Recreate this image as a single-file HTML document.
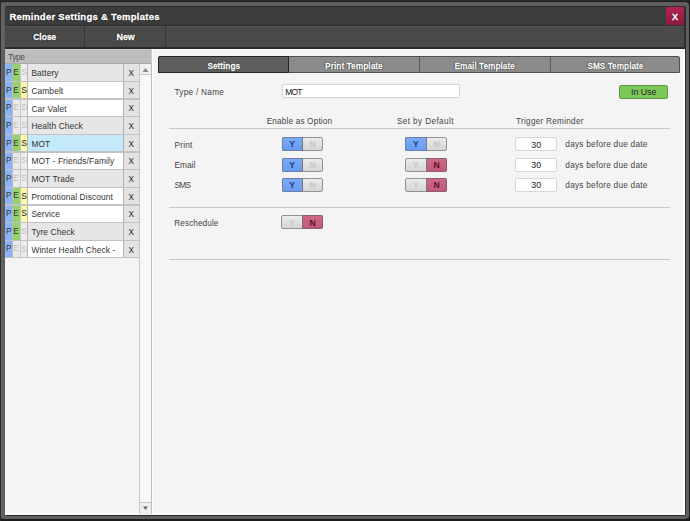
<!DOCTYPE html>
<html><head><meta charset="utf-8">
<style>
html,body{margin:0;padding:0;}
body{width:690px;height:521px;overflow:hidden;background:#2a2a2a;position:relative;font-family:"Liberation Sans",sans-serif;}
.b{position:absolute;box-sizing:border-box;}
.t{position:absolute;line-height:1;white-space:nowrap;font-family:"Liberation Sans",sans-serif;}
</style></head><body>
<div class="b" style="left:0.00px;top:0.00px;width:690.00px;height:521.00px;background:#1c1c1c;border-left:1px solid #2a2a2a;border-top:1px solid #2a2a2a;"></div>
<div class="b" style="left:1.00px;top:2.00px;width:688.00px;height:517.30px;background:#5e5e5e;border-radius:4px;"></div>
<div class="b" style="left:1.00px;top:2.00px;width:1.50px;height:517.30px;background:#646464;border-radius:4px 0 0 4px;"></div>
<div class="b" style="left:4.50px;top:6.00px;width:681.00px;height:509.80px;background:#2c2c2c;border-radius:2px;"></div>
<div class="b" style="left:4.60px;top:6.60px;width:679.90px;height:18.80px;background:#3c3c3c;"></div>
<div class="b" style="left:4.60px;top:24.60px;width:679.90px;height:1.20px;background:#2e2e2e;"></div>
<div class="t" style="left:9.40px;top:12.00px;font-size:9.5px;color:#fff;font-weight:bold;transform-origin:0 0;text-shadow:0 0 1px #000,0 0 1px #000,0 0 2px #000;-webkit-text-stroke:0.35px #fff;letter-spacing:0.28px;">Reminder Settings &amp; Templates</div>
<div class="b" style="left:665.80px;top:6.50px;width:18.70px;height:18.90px;background:linear-gradient(#b22253,#8c1a3f);border-top-right-radius:2px;"></div>
<div class="t" style="left:671.93px;top:13.00px;font-size:9.2px;color:#fff;font-weight:bold;transform-origin:50% 0;text-shadow:0 0 1px #300,0 0 2px #300;-webkit-text-stroke:0.3px #fff;">X</div>
<div class="b" style="left:4.60px;top:25.80px;width:679.90px;height:21.20px;background:#4a4a4a;border-top:1px solid #575757;"></div>
<div class="b" style="left:84.30px;top:25.40px;width:1.00px;height:21.60px;background:#363636;"></div>
<div class="b" style="left:165.10px;top:25.40px;width:1.00px;height:21.60px;background:#363636;"></div>
<div class="t" style="left:31.83px;top:32.00px;font-size:9.4px;color:#fff;font-weight:bold;transform:scaleX(0.9048);transform-origin:50% 0;text-shadow:0 0 1px #000,0 0 1px #000,0 0 2px #000;-webkit-text-stroke:0.35px #fff;">Close</div>
<div class="t" style="left:115.56px;top:32.00px;font-size:9.4px;color:#fff;font-weight:bold;transform:scaleX(0.9491);transform-origin:50% 0;text-shadow:0 0 1px #000,0 0 1px #000,0 0 2px #000;-webkit-text-stroke:0.35px #fff;">New</div>
<div class="b" style="left:5.00px;top:46.50px;width:679.50px;height:2.00px;background:#2a2a2a;"></div>
<div class="b" style="left:4.60px;top:48.50px;width:147.80px;height:466.00px;background:#f4f4f4;"></div>
<div class="b" style="left:4.60px;top:48.50px;width:147.00px;height:15.10px;background:#bdbdbd;border-right:1px solid #cfcfcf;border-top:1px solid #cacaca;border-bottom:1px solid #a9a9a9;"></div>
<div class="t" style="left:7.90px;top:53.00px;font-size:8.5px;color:#4e4e4e;font-weight:normal;letter-spacing:-0.413px;transform-origin:0 0;">Type</div>
<div class="b" style="left:5.00px;top:63.80px;width:7.40px;height:17.64px;background:#8ab4f6;"></div>
<div class="b" style="left:12.40px;top:63.80px;width:7.60px;height:17.64px;background:#93d36d;border-left:1px solid #b9b9b9;"></div>
<div class="b" style="left:20.00px;top:63.80px;width:7.40px;height:17.64px;background:#ececec;border-left:1px solid #c4c4c4;"></div>
<div class="b" style="left:27.40px;top:63.80px;width:95.60px;height:17.64px;background:#e6e6e6;border-left:1px solid #b3b3b3;"></div>
<div class="b" style="left:123.00px;top:63.80px;width:16.50px;height:17.64px;background:#e3e3e3;border-left:1px solid #b0b0b0;"></div>
<div class="t" style="left:6.07px;top:69.00px;font-size:8.2px;color:#333;font-weight:normal;transform-origin:50% 0;">P</div>
<div class="t" style="left:13.37px;top:69.00px;font-size:8.2px;color:#333;font-weight:normal;transform-origin:50% 0;">E</div>
<div class="t" style="left:21.13px;top:68.00px;font-size:8.6px;color:#bdbdbd;font-weight:normal;transform-origin:50% 0;">S</div>
<div class="t" style="left:31.40px;top:69.00px;font-size:8.4px;color:#333;font-weight:normal;transform-origin:0 0;letter-spacing:0.1px;">Battery</div>
<div class="t" style="left:128.57px;top:70.00px;font-size:8.2px;color:#222;font-weight:normal;transform-origin:50% 0;">X</div>
<div class="b" style="left:5.00px;top:81.44px;width:7.40px;height:17.64px;background:#8ab4f6;"></div>
<div class="b" style="left:12.40px;top:81.44px;width:7.60px;height:17.64px;background:#93d36d;border-left:1px solid #b9b9b9;"></div>
<div class="b" style="left:20.00px;top:81.44px;width:7.40px;height:17.64px;background:#fff9a6;border-left:1px solid #c4c4c4;"></div>
<div class="b" style="left:27.40px;top:81.44px;width:95.60px;height:17.64px;background:#ffffff;border-left:1px solid #b3b3b3;"></div>
<div class="b" style="left:123.00px;top:81.44px;width:16.50px;height:17.64px;background:#e3e3e3;border-left:1px solid #b0b0b0;"></div>
<div class="t" style="left:6.07px;top:87.00px;font-size:8.2px;color:#333;font-weight:normal;transform-origin:50% 0;">P</div>
<div class="t" style="left:13.37px;top:87.00px;font-size:8.2px;color:#333;font-weight:normal;transform-origin:50% 0;">E</div>
<div class="t" style="left:21.13px;top:86.00px;font-size:8.6px;color:#222;font-weight:normal;transform-origin:50% 0;">S</div>
<div class="t" style="left:31.40px;top:87.00px;font-size:8.4px;color:#333;font-weight:normal;transform-origin:0 0;letter-spacing:0.1px;">Cambelt</div>
<div class="t" style="left:128.57px;top:88.00px;font-size:8.2px;color:#222;font-weight:normal;transform-origin:50% 0;">X</div>
<div class="b" style="left:5.00px;top:99.08px;width:7.40px;height:17.64px;background:#8ab4f6;"></div>
<div class="b" style="left:12.40px;top:99.08px;width:7.60px;height:17.64px;background:#e9e9e9;border-left:1px solid #b9b9b9;"></div>
<div class="b" style="left:20.00px;top:99.08px;width:7.40px;height:17.64px;background:#ececec;border-left:1px solid #c4c4c4;"></div>
<div class="b" style="left:27.40px;top:99.08px;width:95.60px;height:17.64px;background:#ffffff;border-left:1px solid #b3b3b3;"></div>
<div class="b" style="left:123.00px;top:99.08px;width:16.50px;height:17.64px;background:#e3e3e3;border-left:1px solid #b0b0b0;"></div>
<div class="t" style="left:6.07px;top:104.00px;font-size:8.2px;color:#333;font-weight:normal;transform-origin:50% 0;">P</div>
<div class="t" style="left:13.37px;top:104.00px;font-size:8.2px;color:#bdbdbd;font-weight:normal;transform-origin:50% 0;">E</div>
<div class="t" style="left:21.13px;top:103.00px;font-size:8.6px;color:#bdbdbd;font-weight:normal;transform-origin:50% 0;">S</div>
<div class="t" style="left:31.40px;top:105.00px;font-size:8.4px;color:#333;font-weight:normal;transform-origin:0 0;letter-spacing:0.1px;">Car Valet</div>
<div class="t" style="left:128.57px;top:105.00px;font-size:8.2px;color:#222;font-weight:normal;transform-origin:50% 0;">X</div>
<div class="b" style="left:5.00px;top:116.72px;width:7.40px;height:17.64px;background:#8ab4f6;"></div>
<div class="b" style="left:12.40px;top:116.72px;width:7.60px;height:17.64px;background:#e9e9e9;border-left:1px solid #b9b9b9;"></div>
<div class="b" style="left:20.00px;top:116.72px;width:7.40px;height:17.64px;background:#ececec;border-left:1px solid #c4c4c4;"></div>
<div class="b" style="left:27.40px;top:116.72px;width:95.60px;height:17.64px;background:#e6e6e6;border-left:1px solid #b3b3b3;"></div>
<div class="b" style="left:123.00px;top:116.72px;width:16.50px;height:17.64px;background:#e3e3e3;border-left:1px solid #b0b0b0;"></div>
<div class="t" style="left:6.07px;top:122.00px;font-size:8.2px;color:#333;font-weight:normal;transform-origin:50% 0;">P</div>
<div class="t" style="left:13.37px;top:122.00px;font-size:8.2px;color:#bdbdbd;font-weight:normal;transform-origin:50% 0;">E</div>
<div class="t" style="left:21.13px;top:121.00px;font-size:8.6px;color:#bdbdbd;font-weight:normal;transform-origin:50% 0;">S</div>
<div class="t" style="left:31.40px;top:122.00px;font-size:8.4px;color:#333;font-weight:normal;transform-origin:0 0;letter-spacing:0.1px;">Health Check</div>
<div class="t" style="left:128.57px;top:123.00px;font-size:8.2px;color:#222;font-weight:normal;transform-origin:50% 0;">X</div>
<div class="b" style="left:5.00px;top:134.36px;width:7.40px;height:17.64px;background:#8ab4f6;"></div>
<div class="b" style="left:12.40px;top:134.36px;width:7.60px;height:17.64px;background:#93d36d;border-left:1px solid #b9b9b9;"></div>
<div class="b" style="left:20.00px;top:134.36px;width:7.40px;height:17.64px;background:#fff9a6;border-left:1px solid #c4c4c4;"></div>
<div class="b" style="left:27.40px;top:134.36px;width:95.60px;height:17.64px;background:#c4e9fb;border-left:1px solid #b3b3b3;"></div>
<div class="b" style="left:123.00px;top:134.36px;width:16.50px;height:17.64px;background:#e3e3e3;border-left:1px solid #b0b0b0;"></div>
<div class="t" style="left:6.07px;top:140.00px;font-size:8.2px;color:#333;font-weight:normal;transform-origin:50% 0;">P</div>
<div class="t" style="left:13.37px;top:140.00px;font-size:8.2px;color:#333;font-weight:normal;transform-origin:50% 0;">E</div>
<div class="t" style="left:21.13px;top:139.00px;font-size:8.6px;color:#222;font-weight:normal;transform-origin:50% 0;">S</div>
<div class="t" style="left:31.40px;top:140.00px;font-size:8.4px;color:#333;font-weight:normal;transform-origin:0 0;letter-spacing:0.1px;">MOT</div>
<div class="t" style="left:128.57px;top:141.00px;font-size:8.2px;color:#222;font-weight:normal;transform-origin:50% 0;">X</div>
<div class="b" style="left:5.00px;top:152.00px;width:7.40px;height:17.64px;background:#8ab4f6;"></div>
<div class="b" style="left:12.40px;top:152.00px;width:7.60px;height:17.64px;background:#e9e9e9;border-left:1px solid #b9b9b9;"></div>
<div class="b" style="left:20.00px;top:152.00px;width:7.40px;height:17.64px;background:#ececec;border-left:1px solid #c4c4c4;"></div>
<div class="b" style="left:27.40px;top:152.00px;width:95.60px;height:17.64px;background:#ffffff;border-left:1px solid #b3b3b3;"></div>
<div class="b" style="left:123.00px;top:152.00px;width:16.50px;height:17.64px;background:#e3e3e3;border-left:1px solid #b0b0b0;"></div>
<div class="t" style="left:6.07px;top:157.00px;font-size:8.2px;color:#333;font-weight:normal;transform-origin:50% 0;">P</div>
<div class="t" style="left:13.37px;top:157.00px;font-size:8.2px;color:#bdbdbd;font-weight:normal;transform-origin:50% 0;">E</div>
<div class="t" style="left:21.13px;top:156.00px;font-size:8.6px;color:#bdbdbd;font-weight:normal;transform-origin:50% 0;">S</div>
<div class="t" style="left:31.40px;top:157.00px;font-size:8.4px;color:#333;font-weight:normal;transform-origin:0 0;letter-spacing:0.1px;">MOT - Friends/Family</div>
<div class="t" style="left:128.57px;top:158.00px;font-size:8.2px;color:#222;font-weight:normal;transform-origin:50% 0;">X</div>
<div class="b" style="left:5.00px;top:169.64px;width:7.40px;height:17.64px;background:#8ab4f6;"></div>
<div class="b" style="left:12.40px;top:169.64px;width:7.60px;height:17.64px;background:#e9e9e9;border-left:1px solid #b9b9b9;"></div>
<div class="b" style="left:20.00px;top:169.64px;width:7.40px;height:17.64px;background:#ececec;border-left:1px solid #c4c4c4;"></div>
<div class="b" style="left:27.40px;top:169.64px;width:95.60px;height:17.64px;background:#e6e6e6;border-left:1px solid #b3b3b3;"></div>
<div class="b" style="left:123.00px;top:169.64px;width:16.50px;height:17.64px;background:#e3e3e3;border-left:1px solid #b0b0b0;"></div>
<div class="t" style="left:6.07px;top:175.00px;font-size:8.2px;color:#333;font-weight:normal;transform-origin:50% 0;">P</div>
<div class="t" style="left:13.37px;top:175.00px;font-size:8.2px;color:#bdbdbd;font-weight:normal;transform-origin:50% 0;">E</div>
<div class="t" style="left:21.13px;top:174.00px;font-size:8.6px;color:#bdbdbd;font-weight:normal;transform-origin:50% 0;">S</div>
<div class="t" style="left:31.40px;top:175.00px;font-size:8.4px;color:#333;font-weight:normal;transform-origin:0 0;letter-spacing:0.1px;">MOT Trade</div>
<div class="t" style="left:128.57px;top:176.00px;font-size:8.2px;color:#222;font-weight:normal;transform-origin:50% 0;">X</div>
<div class="b" style="left:5.00px;top:187.28px;width:7.40px;height:17.64px;background:#8ab4f6;"></div>
<div class="b" style="left:12.40px;top:187.28px;width:7.60px;height:17.64px;background:#93d36d;border-left:1px solid #b9b9b9;"></div>
<div class="b" style="left:20.00px;top:187.28px;width:7.40px;height:17.64px;background:#fff9a6;border-left:1px solid #c4c4c4;"></div>
<div class="b" style="left:27.40px;top:187.28px;width:95.60px;height:17.64px;background:#ffffff;border-left:1px solid #b3b3b3;"></div>
<div class="b" style="left:123.00px;top:187.28px;width:16.50px;height:17.64px;background:#e3e3e3;border-left:1px solid #b0b0b0;"></div>
<div class="t" style="left:6.07px;top:192.00px;font-size:8.2px;color:#333;font-weight:normal;transform-origin:50% 0;">P</div>
<div class="t" style="left:13.37px;top:192.00px;font-size:8.2px;color:#333;font-weight:normal;transform-origin:50% 0;">E</div>
<div class="t" style="left:21.13px;top:192.00px;font-size:8.6px;color:#222;font-weight:normal;transform-origin:50% 0;">S</div>
<div class="t" style="left:31.40px;top:193.00px;font-size:8.4px;color:#333;font-weight:normal;transform-origin:0 0;letter-spacing:0.1px;">Promotional Discount</div>
<div class="t" style="left:128.57px;top:194.00px;font-size:8.2px;color:#222;font-weight:normal;transform-origin:50% 0;">X</div>
<div class="b" style="left:5.00px;top:204.92px;width:7.40px;height:17.64px;background:#8ab4f6;"></div>
<div class="b" style="left:12.40px;top:204.92px;width:7.60px;height:17.64px;background:#93d36d;border-left:1px solid #b9b9b9;"></div>
<div class="b" style="left:20.00px;top:204.92px;width:7.40px;height:17.64px;background:#fff9a6;border-left:1px solid #c4c4c4;"></div>
<div class="b" style="left:27.40px;top:204.92px;width:95.60px;height:17.64px;background:#ffffff;border-left:1px solid #b3b3b3;"></div>
<div class="b" style="left:123.00px;top:204.92px;width:16.50px;height:17.64px;background:#e3e3e3;border-left:1px solid #b0b0b0;"></div>
<div class="t" style="left:6.07px;top:210.00px;font-size:8.2px;color:#333;font-weight:normal;transform-origin:50% 0;">P</div>
<div class="t" style="left:13.37px;top:210.00px;font-size:8.2px;color:#333;font-weight:normal;transform-origin:50% 0;">E</div>
<div class="t" style="left:21.13px;top:209.00px;font-size:8.6px;color:#222;font-weight:normal;transform-origin:50% 0;">S</div>
<div class="t" style="left:31.40px;top:210.00px;font-size:8.4px;color:#333;font-weight:normal;transform-origin:0 0;letter-spacing:0.1px;">Service</div>
<div class="t" style="left:128.57px;top:211.00px;font-size:8.2px;color:#222;font-weight:normal;transform-origin:50% 0;">X</div>
<div class="b" style="left:5.00px;top:222.56px;width:7.40px;height:17.64px;background:#8ab4f6;"></div>
<div class="b" style="left:12.40px;top:222.56px;width:7.60px;height:17.64px;background:#93d36d;border-left:1px solid #b9b9b9;"></div>
<div class="b" style="left:20.00px;top:222.56px;width:7.40px;height:17.64px;background:#ececec;border-left:1px solid #c4c4c4;"></div>
<div class="b" style="left:27.40px;top:222.56px;width:95.60px;height:17.64px;background:#e6e6e6;border-left:1px solid #b3b3b3;"></div>
<div class="b" style="left:123.00px;top:222.56px;width:16.50px;height:17.64px;background:#e3e3e3;border-left:1px solid #b0b0b0;"></div>
<div class="t" style="left:6.07px;top:228.00px;font-size:8.2px;color:#333;font-weight:normal;transform-origin:50% 0;">P</div>
<div class="t" style="left:13.37px;top:228.00px;font-size:8.2px;color:#333;font-weight:normal;transform-origin:50% 0;">E</div>
<div class="t" style="left:21.13px;top:227.00px;font-size:8.6px;color:#bdbdbd;font-weight:normal;transform-origin:50% 0;">S</div>
<div class="t" style="left:31.40px;top:228.00px;font-size:8.4px;color:#333;font-weight:normal;transform-origin:0 0;letter-spacing:0.1px;">Tyre Check</div>
<div class="t" style="left:128.57px;top:229.00px;font-size:8.2px;color:#222;font-weight:normal;transform-origin:50% 0;">X</div>
<div class="b" style="left:5.00px;top:240.20px;width:7.40px;height:17.64px;background:#8ab4f6;"></div>
<div class="b" style="left:12.40px;top:240.20px;width:7.60px;height:17.64px;background:#e9e9e9;border-left:1px solid #b9b9b9;"></div>
<div class="b" style="left:20.00px;top:240.20px;width:7.40px;height:17.64px;background:#ececec;border-left:1px solid #c4c4c4;"></div>
<div class="b" style="left:27.40px;top:240.20px;width:95.60px;height:17.64px;background:#ffffff;border-left:1px solid #b3b3b3;"></div>
<div class="b" style="left:123.00px;top:240.20px;width:16.50px;height:17.64px;background:#e3e3e3;border-left:1px solid #b0b0b0;"></div>
<div class="t" style="left:6.07px;top:245.00px;font-size:8.2px;color:#333;font-weight:normal;transform-origin:50% 0;">P</div>
<div class="t" style="left:13.37px;top:245.00px;font-size:8.2px;color:#bdbdbd;font-weight:normal;transform-origin:50% 0;">E</div>
<div class="t" style="left:21.13px;top:245.00px;font-size:8.6px;color:#bdbdbd;font-weight:normal;transform-origin:50% 0;">S</div>
<div class="t" style="left:31.40px;top:246.00px;font-size:8.4px;color:#333;font-weight:normal;transform-origin:0 0;letter-spacing:0.1px;">Winter Health Check -</div>
<div class="t" style="left:128.57px;top:247.00px;font-size:8.2px;color:#222;font-weight:normal;transform-origin:50% 0;">X</div>
<div class="b" style="left:5.00px;top:80.84px;width:134.50px;height:1.20px;background:#c2c2c2;"></div>
<div class="b" style="left:5.00px;top:98.48px;width:134.50px;height:1.20px;background:#c2c2c2;"></div>
<div class="b" style="left:5.00px;top:116.12px;width:134.50px;height:1.20px;background:#c2c2c2;"></div>
<div class="b" style="left:5.00px;top:133.76px;width:134.50px;height:1.20px;background:#c2c2c2;"></div>
<div class="b" style="left:5.00px;top:151.40px;width:134.50px;height:1.20px;background:#c2c2c2;"></div>
<div class="b" style="left:5.00px;top:169.04px;width:134.50px;height:1.20px;background:#c2c2c2;"></div>
<div class="b" style="left:5.00px;top:186.68px;width:134.50px;height:1.20px;background:#c2c2c2;"></div>
<div class="b" style="left:5.00px;top:204.32px;width:134.50px;height:1.20px;background:#c2c2c2;"></div>
<div class="b" style="left:5.00px;top:221.96px;width:134.50px;height:1.20px;background:#c2c2c2;"></div>
<div class="b" style="left:5.00px;top:239.60px;width:134.50px;height:1.20px;background:#c2c2c2;"></div>
<div class="b" style="left:5.00px;top:257.24px;width:134.50px;height:1.20px;background:#c2c2c2;"></div>
<div class="b" style="left:139.40px;top:63.60px;width:12.20px;height:450.90px;background:#f7f7f7;border-left:1px solid #c6c6c6;border-right:1px solid #bdbdbd;"></div>
<div class="b" style="left:139.40px;top:63.60px;width:12.20px;height:11.80px;background:#f0f0f0;border:1px solid #c6c6c6;border-right-color:#bdbdbd;border-top:0;"></div>
<svg class="b" style="left:141px;top:66px;width:9px;height:8px;position:absolute" viewBox="0 0 9 8"><path d="M1.5 6 L4.5 2 L7.5 6Z" fill="#888"/></svg>
<div class="b" style="left:139.40px;top:502.30px;width:12.20px;height:12.20px;background:#efefef;border:1px solid #c6c6c6;border-right-color:#bdbdbd;border-bottom:0;"></div>
<svg class="b" style="left:141px;top:504px;width:9px;height:8px;position:absolute" viewBox="0 0 9 8"><path d="M2 2.5 L4.5 6 L7 2.5Z" fill="#666"/></svg>
<div class="b" style="left:5.00px;top:512.60px;width:134.40px;height:1.90px;background:#fff;"></div>
<div class="b" style="left:151.60px;top:48.50px;width:532.90px;height:466.00px;background:#f4f4f4;"></div>
<div class="b" style="left:152.30px;top:48.50px;width:532.20px;height:1.20px;background:#fff;"></div>
<div class="b" style="left:152.30px;top:48.50px;width:1.20px;height:466.00px;background:#fff;"></div>
<div class="b" style="left:682.50px;top:48.50px;width:2.00px;height:466.00px;background:#fff;"></div>
<div class="b" style="left:152.30px;top:512.60px;width:532.20px;height:1.90px;background:#fff;"></div>
<div class="b" style="left:158.00px;top:56.00px;width:522.30px;height:17.00px;background:#8b8b8b;border:1px solid #505050;border-radius:2px 2px 0 0;"></div>
<div class="b" style="left:158.00px;top:56.00px;width:131.00px;height:17.00px;background:#5e5e5e;border:1px solid #262626;border-radius:2px 0 0 0;"></div>
<div class="t" style="left:205.74px;top:62.00px;font-size:9.0px;color:#fff;font-weight:bold;transform:scaleX(0.9151);transform-origin:50% 0;text-shadow:0 0 1px #000,0 0 1px #000,0 0 1.5px #000;-webkit-text-stroke:0.3px #fff;">Settings</div>
<div class="t" style="left:323.07px;top:62.00px;font-size:9.0px;color:#fff;font-weight:bold;transform:scaleX(0.9328);transform-origin:50% 0;text-shadow:0 0 1px #000,0 0 1px #000,0 0 1.5px #000;-webkit-text-stroke:0.3px #fff;">Print Template</div>
<div class="b" style="left:418.50px;top:56.50px;width:1.00px;height:16.00px;background:#5c5c5c;"></div>
<div class="t" style="left:451.82px;top:62.00px;font-size:9.0px;color:#fff;font-weight:bold;transform:scaleX(0.9226);transform-origin:50% 0;text-shadow:0 0 1px #000,0 0 1px #000,0 0 1.5px #000;-webkit-text-stroke:0.3px #fff;">Email Template</div>
<div class="b" style="left:549.50px;top:56.50px;width:1.00px;height:16.00px;background:#5c5c5c;"></div>
<div class="t" style="left:584.72px;top:62.00px;font-size:9.0px;color:#fff;font-weight:bold;transform:scaleX(0.9202);transform-origin:50% 0;text-shadow:0 0 1px #000,0 0 1px #000,0 0 1.5px #000;-webkit-text-stroke:0.3px #fff;">SMS Template</div>
<div class="t" style="left:174.40px;top:88.00px;font-size:8.3px;color:#444;font-weight:normal;letter-spacing:0.255px;transform-origin:0 0;">Type / Name</div>
<div class="b" style="left:281.50px;top:84.40px;width:178.50px;height:13.40px;background:#fff;border:1px solid #d6d6d6;border-radius:2px;box-shadow:0 0 1px #e0e0e0;"></div>
<div class="t" style="left:285.30px;top:88.00px;font-size:8.4px;color:#222;font-weight:normal;letter-spacing:-0.805px;transform-origin:0 0;">MOT</div>
<div class="b" style="left:619.00px;top:84.80px;width:49.40px;height:13.80px;background:#7cc95a;border:1px solid #5b9a40;border-radius:2px;"></div>
<div class="t" style="left:630.98px;top:88.00px;font-size:8.8px;color:#222;font-weight:normal;transform-origin:50% 0;">In Use</div>
<div class="t" style="left:266.65px;top:118.00px;font-size:8.2px;color:#444;font-weight:normal;letter-spacing:0.178px;transform-origin:50% 0;">Enable as Option</div>
<div class="t" style="left:396.95px;top:118.00px;font-size:8.2px;color:#444;font-weight:normal;letter-spacing:0.389px;transform-origin:50% 0;">Set by Default</div>
<div class="t" style="left:516.00px;top:118.00px;font-size:8.2px;color:#444;font-weight:normal;letter-spacing:0.273px;transform-origin:0 0;">Trigger Reminder</div>
<div class="b" style="left:169.40px;top:127.60px;width:500.60px;height:1.00px;background:#c9c9c9;"></div>
<div class="t" style="left:174.50px;top:141.00px;font-size:8.3px;color:#444;font-weight:normal;letter-spacing:0.184px;transform-origin:0 0;">Print</div>
<div class="b" style="left:281.80px;top:137.00px;width:40.90px;height:14.00px;background:linear-gradient(#ebebeb,#d5d5d5);border:1px solid #939393;border-radius:2px;"></div>
<div class="b" style="left:281.80px;top:137.00px;width:20.75px;height:14.00px;background:linear-gradient(#7babf5,#6a9bef);border:1px solid #6b7fa8;border-right:0;border-radius:2px 0 0 2px;"></div>
<div class="b" style="left:302.05px;top:137.00px;width:1.00px;height:14.00px;background:#777;"></div>
<div class="t" style="left:289.31px;top:140.00px;font-size:8.6px;color:#1c3c8c;font-weight:bold;transform-origin:50% 0;">Y</div>
<div class="t" style="left:309.52px;top:140.00px;font-size:8.6px;color:#c6c6c6;font-weight:bold;transform-origin:50% 0;">N</div>
<div class="b" style="left:405.30px;top:137.00px;width:41.70px;height:14.00px;background:linear-gradient(#ebebeb,#d5d5d5);border:1px solid #939393;border-radius:2px;"></div>
<div class="b" style="left:405.30px;top:137.00px;width:21.15px;height:14.00px;background:linear-gradient(#7babf5,#6a9bef);border:1px solid #6b7fa8;border-right:0;border-radius:2px 0 0 2px;"></div>
<div class="b" style="left:425.95px;top:137.00px;width:1.00px;height:14.00px;background:#777;"></div>
<div class="t" style="left:413.01px;top:140.00px;font-size:8.6px;color:#1c3c8c;font-weight:bold;transform-origin:50% 0;">Y</div>
<div class="t" style="left:433.62px;top:140.00px;font-size:8.6px;color:#c6c6c6;font-weight:bold;transform-origin:50% 0;">N</div>
<div class="b" style="left:515.20px;top:137.00px;width:42.10px;height:14.00px;background:#fff;border:1px solid #d6d6d6;border-radius:2px;"></div>
<div class="t" style="left:531.30px;top:141.00px;font-size:8.8px;color:#222;font-weight:normal;transform-origin:50% 0;">30</div>
<div class="t" style="left:565.30px;top:140.00px;font-size:8.3px;color:#444;font-weight:normal;letter-spacing:0.217px;transform-origin:0 0;">days before due date</div>
<div class="t" style="left:174.50px;top:161.00px;font-size:8.3px;color:#444;font-weight:normal;letter-spacing:0.013px;transform-origin:0 0;">Email</div>
<div class="b" style="left:281.80px;top:157.50px;width:40.90px;height:14.00px;background:linear-gradient(#ebebeb,#d5d5d5);border:1px solid #939393;border-radius:2px;"></div>
<div class="b" style="left:281.80px;top:157.50px;width:20.75px;height:14.00px;background:linear-gradient(#7babf5,#6a9bef);border:1px solid #6b7fa8;border-right:0;border-radius:2px 0 0 2px;"></div>
<div class="b" style="left:302.05px;top:157.50px;width:1.00px;height:14.00px;background:#777;"></div>
<div class="t" style="left:289.31px;top:161.00px;font-size:8.6px;color:#1c3c8c;font-weight:bold;transform-origin:50% 0;">Y</div>
<div class="t" style="left:309.52px;top:161.00px;font-size:8.6px;color:#c6c6c6;font-weight:bold;transform-origin:50% 0;">N</div>
<div class="b" style="left:405.30px;top:157.50px;width:41.70px;height:14.00px;background:linear-gradient(#ebebeb,#d5d5d5);border:1px solid #939393;border-radius:2px;"></div>
<div class="b" style="left:426.45px;top:157.50px;width:20.55px;height:14.00px;background:linear-gradient(#cf6887,#c15a79);border:1px solid #8a6070;border-left:0;border-radius:0 2px 2px 0;"></div>
<div class="b" style="left:425.95px;top:157.50px;width:1.00px;height:14.00px;background:#777;"></div>
<div class="t" style="left:413.01px;top:161.00px;font-size:8.6px;color:#c6c6c6;font-weight:bold;transform-origin:50% 0;">Y</div>
<div class="t" style="left:433.62px;top:161.00px;font-size:8.6px;color:#5a0f2a;font-weight:bold;transform-origin:50% 0;">N</div>
<div class="b" style="left:515.20px;top:157.50px;width:42.10px;height:14.00px;background:#fff;border:1px solid #d6d6d6;border-radius:2px;"></div>
<div class="t" style="left:531.30px;top:161.00px;font-size:8.8px;color:#222;font-weight:normal;transform-origin:50% 0;">30</div>
<div class="t" style="left:565.30px;top:161.00px;font-size:8.3px;color:#444;font-weight:normal;letter-spacing:0.217px;transform-origin:0 0;">days before due date</div>
<div class="t" style="left:174.50px;top:181.00px;font-size:8.3px;color:#444;font-weight:normal;letter-spacing:-0.692px;transform-origin:0 0;">SMS</div>
<div class="b" style="left:281.80px;top:177.80px;width:40.90px;height:14.00px;background:linear-gradient(#ebebeb,#d5d5d5);border:1px solid #939393;border-radius:2px;"></div>
<div class="b" style="left:281.80px;top:177.80px;width:20.75px;height:14.00px;background:linear-gradient(#7babf5,#6a9bef);border:1px solid #6b7fa8;border-right:0;border-radius:2px 0 0 2px;"></div>
<div class="b" style="left:302.05px;top:177.80px;width:1.00px;height:14.00px;background:#777;"></div>
<div class="t" style="left:289.31px;top:181.00px;font-size:8.6px;color:#1c3c8c;font-weight:bold;transform-origin:50% 0;">Y</div>
<div class="t" style="left:309.52px;top:181.00px;font-size:8.6px;color:#c6c6c6;font-weight:bold;transform-origin:50% 0;">N</div>
<div class="b" style="left:405.30px;top:177.80px;width:41.70px;height:14.00px;background:linear-gradient(#ebebeb,#d5d5d5);border:1px solid #939393;border-radius:2px;"></div>
<div class="b" style="left:426.45px;top:177.80px;width:20.55px;height:14.00px;background:linear-gradient(#cf6887,#c15a79);border:1px solid #8a6070;border-left:0;border-radius:0 2px 2px 0;"></div>
<div class="b" style="left:425.95px;top:177.80px;width:1.00px;height:14.00px;background:#777;"></div>
<div class="t" style="left:413.01px;top:181.00px;font-size:8.6px;color:#c6c6c6;font-weight:bold;transform-origin:50% 0;">Y</div>
<div class="t" style="left:433.62px;top:181.00px;font-size:8.6px;color:#5a0f2a;font-weight:bold;transform-origin:50% 0;">N</div>
<div class="b" style="left:515.20px;top:177.80px;width:42.10px;height:14.00px;background:#fff;border:1px solid #d6d6d6;border-radius:2px;"></div>
<div class="t" style="left:531.30px;top:181.00px;font-size:8.8px;color:#222;font-weight:normal;transform-origin:50% 0;">30</div>
<div class="t" style="left:565.30px;top:181.00px;font-size:8.3px;color:#444;font-weight:normal;letter-spacing:0.217px;transform-origin:0 0;">days before due date</div>
<div class="b" style="left:169.40px;top:206.70px;width:500.60px;height:1.00px;background:#c9c9c9;"></div>
<div class="t" style="left:174.30px;top:220.00px;font-size:8.2px;color:#444;font-weight:normal;letter-spacing:0.094px;transform-origin:0 0;">Reschedule</div>
<div class="b" style="left:281.20px;top:215.20px;width:41.80px;height:14.20px;background:linear-gradient(#ebebeb,#d5d5d5);border:1px solid #939393;border-radius:2px;"></div>
<div class="b" style="left:302.40px;top:215.20px;width:20.60px;height:14.20px;background:linear-gradient(#cf6887,#c15a79);border:1px solid #8a6070;border-left:0;border-radius:0 2px 2px 0;"></div>
<div class="b" style="left:301.90px;top:215.20px;width:1.00px;height:14.20px;background:#777;"></div>
<div class="t" style="left:288.93px;top:219.00px;font-size:8.6px;color:#c6c6c6;font-weight:bold;transform-origin:50% 0;">Y</div>
<div class="t" style="left:309.59px;top:219.00px;font-size:8.6px;color:#5a0f2a;font-weight:bold;transform-origin:50% 0;">N</div>
<div class="b" style="left:169.40px;top:258.80px;width:500.60px;height:1.00px;background:#c9c9c9;"></div>
</body></html>
